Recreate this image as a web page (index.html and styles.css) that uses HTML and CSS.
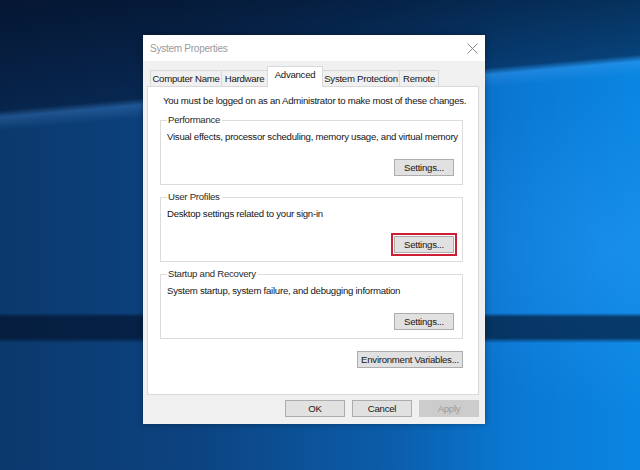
FILE: index.html
```html
<!DOCTYPE html>
<html lang="en">
<head>
<meta charset="utf-8">
<title>System Properties</title>
<link rel="stylesheet" href="styles.css">
</head>
<body>
<div class="dialog">
  <div class="titlebar">
    <span class="title">System Properties</span>
    <svg class="close" width="11" height="11" viewBox="0 0 11 11"><path d="M0.5 0.5 L10.5 10.5 M10.5 0.5 L0.5 10.5" stroke="#8a8a8a" stroke-width="1" fill="none"/></svg>
  </div>
  <div class="content">
    <div class="tabs">
      <div class="tab t-cn">Computer Name</div>
      <div class="tab t-hw">Hardware</div>
      <div class="tab active t-adv">Advanced</div>
      <div class="tab t-sp">System Protection</div>
      <div class="tab t-rm">Remote</div>
    </div>
    <div class="panel">
      <p class="note">You must be logged on as an Administrator to make most of these changes.</p>
      <div class="group">
        <span class="legend">Performance</span>
        <p class="desc">Visual effects, processor scheduling, memory usage, and virtual memory</p>
        <div class="btnrow"><button class="btn">Settings...</button></div>
      </div>
      <div class="group">
        <span class="legend">User Profiles</span>
        <p class="desc">Desktop settings related to your sign-in</p>
        <div class="btnrow"><button class="btn highlight">Settings...</button></div>
      </div>
      <div class="group">
        <span class="legend">Startup and Recovery</span>
        <p class="desc">System startup, system failure, and debugging information</p>
        <div class="btnrow"><button class="btn">Settings...</button></div>
      </div>
      <div class="envrow"><button class="btn env">Environment Variables...</button></div>
    </div>
    <div class="actions">
      <button class="btn">OK</button>
      <button class="btn">Cancel</button>
      <button class="btn disabled">Apply</button>
    </div>
  </div>
</div>
</body>
</html>
```
FILE: styles.css
```css
html, body {
  margin: 0;
  padding: 0;
}
body {
  width: 640px;
  height: 470px;
  overflow: hidden;
  font-family: "Liberation Sans", Arial, sans-serif;
  font-size: 9.6px;
  letter-spacing: -0.25px;
  color: #161616;
  background:
    linear-gradient(180deg, transparent 313px, rgba(2, 16, 40, 0.65) 317px, rgba(2, 16, 40, 0.65) 338px, transparent 343px),
    linear-gradient(175deg, rgba(4, 18, 42, 0.88) 0px, rgba(5, 24, 56, 0.62) 110px, rgba(110, 180, 255, 0.2) 117px, rgba(20, 60, 120, 0) 130px, transparent 100%),
    radial-gradient(ellipse 220px 160px at 620px 250px, rgba(50, 160, 255, 0.35), transparent),
    linear-gradient(90deg, #0b396d 0%, #0c4380 30%, #0b5eac 62%, #0a78d3 80%, #0a86e2 100%);
}
.dialog {
  margin: 35px 0 0 143px;
  width: 342px;
  height: 389px;
  background: #f0f0f0;
  box-shadow: 0 0 6px rgba(0, 0, 0, 0.35);
  display: flex;
  flex-direction: column;
}
.titlebar {
  height: 26px;
  background: #ffffff;
  display: flex;
  align-items: center;
  justify-content: space-between;
  padding: 0 7px 0 7px;
}
.title {
  color: #9a9a9a;
  font-size: 10px;
}
.close {
  display: block;
  margin-top: 1px;
}
.content {
  padding: 5px 6px 0 4px;
  display: flex;
  flex-direction: column;
}
.tabs {
  height: 20px;
  display: flex;
  align-items: flex-end;
  padding-left: 3px;
  position: relative;
  z-index: 1;
}
.tab {
  height: 16px;
  line-height: 15px;
  box-sizing: border-box;
  border: 1px solid #d9d9d9;
  border-bottom: none;
  background: #f0f0f0;
  text-align: center;
  color: #161616;
}
.t-cn { width: 72px; }
.t-hw { width: 47px; margin-left: -1px; }
.t-adv { width: 56px; }
.t-sp { width: 78px; }
.t-rm { width: 40px; margin-left: -1px; }
.tab.active {
  height: 21px;
  line-height: 16px;
  background: #ffffff;
  margin-bottom: -1px;
  margin-left: -1px;
  margin-right: -1px;
}
.panel {
  height: 309px;
  box-sizing: border-box;
  background: #ffffff;
  border: 1px solid #d9d9d9;
  padding: 8px 15px 0 12px;
  display: flex;
  flex-direction: column;
}
.note {
  margin: 0 0 13px 3px;
  line-height: 12px;
  white-space: nowrap;
}
.group {
  border: 1px solid #dcdcdc;
  height: 65px;
  box-sizing: border-box;
  margin-bottom: 12px;
  padding: 0 8px 0 6px;
  display: flex;
  flex-direction: column;
}
.legend {
  align-self: flex-start;
  margin-top: -7px;
  padding: 0 2px 0 1px;
  background: #ffffff;
  line-height: 12px;
  color: #2a2a2a;
}
.desc {
  margin: 5px 0 0 0;
  line-height: 12px;
  white-space: nowrap;
}
.btnrow {
  margin-top: auto;
  margin-bottom: 8px;
  display: flex;
  justify-content: flex-end;
}
.btn {
  font-family: inherit;
  font-size: 9.6px;
  letter-spacing: -0.25px;
  width: 60px;
  height: 17px;
  padding: 0;
  margin: 0;
  background: #e1e1e1;
  border: 1px solid #adadad;
  color: #161616;
  line-height: 15px;
}
.btn.highlight {
  outline: 2px solid #cc1f36;
  outline-offset: 1px;
}
.envrow {
  display: flex;
  justify-content: flex-end;
}
.btn.env {
  width: 106px;
}
.actions {
  margin-top: 5px;
  display: flex;
  justify-content: flex-end;
  gap: 7px;
}
.btn.disabled {
  background: #cccccc;
  border-color: #cccccc;
  color: #9b9b9b;
}
```
